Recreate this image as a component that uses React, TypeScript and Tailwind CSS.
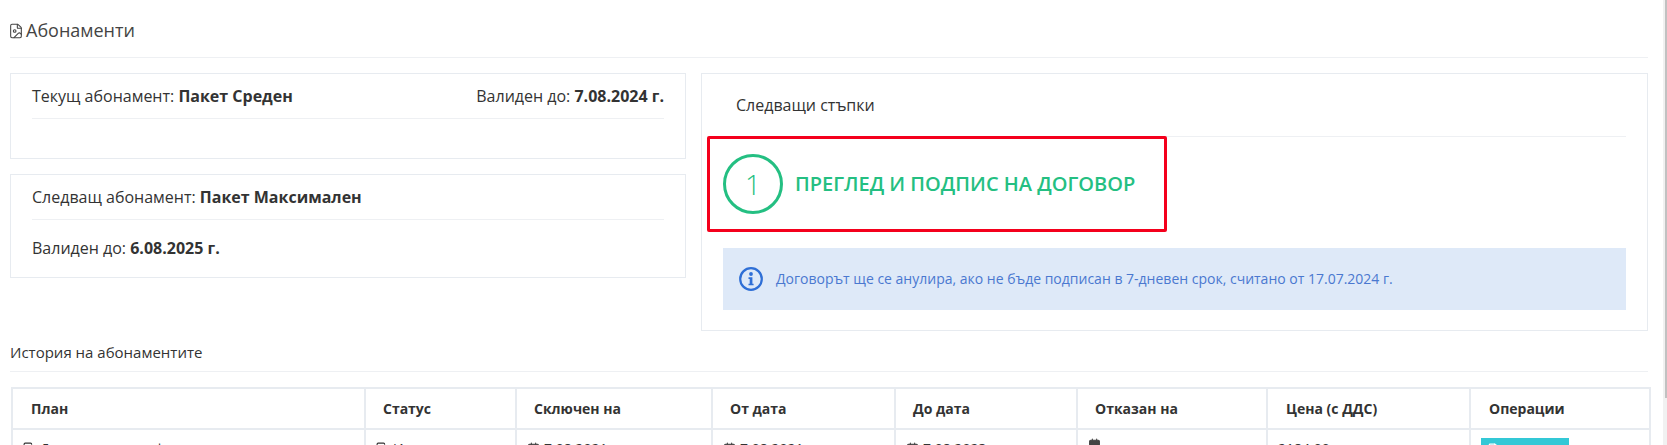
import { Calendar, Copy, FileImage, FileText } from "lucide-react";

const font = "font-['Open_Sans','Noto_Sans',sans-serif]";

const columns = [
  { label: "План", width: "w-[353px]", pad: "pl-[18px]" },
  { label: "Статус", width: "w-[151px]", pad: "pl-[17px]" },
  { label: "Сключен на", width: "w-[196px]", pad: "pl-[17px]" },
  { label: "От дата", width: "w-[183px]", pad: "pl-[17px]" },
  { label: "До дата", width: "w-[182px]", pad: "pl-[17px]" },
  { label: "Отказан на", width: "w-[190px]", pad: "pl-[17px]" },
  { label: "Цена (с ДДС)", width: "w-[203px]", pad: "pl-[18px]" },
  { label: "Операции", width: "w-[180px]", pad: "pl-[18px]" },
];

function DateCell({ value }: { value?: string }) {
  return (
    <td className="border-2 border-[#e7ebf0] px-[10px] pt-[8px] align-top text-[14px] text-[#333]">
      <span className="flex items-center gap-1">
        <Calendar size={13} fill="#444" stroke="#444" />
        {value}
      </span>
    </td>
  );
}

function TextCell({ label }: { label: string }) {
  return (
    <td className="border-2 border-[#e7ebf0] px-[10px] pt-[8px] align-top text-[14px]">
      <span className="flex items-center gap-1">
        <Copy size={13} />
        {label}
      </span>
    </td>
  );
}

function InfoIcon() {
  return (
    <svg width="24" height="24" viewBox="0 0 24 24" className="shrink-0 text-[#2f6fd6]">
      <circle cx="12" cy="12" r="10.8" fill="none" stroke="currentColor" strokeWidth="2.2" />
      <circle cx="12" cy="7" r="1.9" fill="currentColor" />
      <path d="M9.5 10.3h3.9v6.4h1.2v1.6H9.5v-1.6h1.2v-4.8H9.5z" fill="currentColor" />
    </svg>
  );
}

export default function App() {
  return (
    <div className={`${font} relative h-[445px] overflow-hidden bg-white pl-[10px] pr-[19px] text-[#333]`}>
      {/* Title */}
      <div className="flex h-[58px] items-center gap-[2px] border-b border-[#eef0f3] pt-1 text-[18px] text-[#444]">
        <FileImage size={16} strokeWidth={1.6} className="-ml-[2px]" />
        <span>Абонаменти</span>
      </div>

      <div className="mt-[15px] flex h-[258px] gap-[15px]">
        {/* Left column */}
        <div className="flex w-[676px] flex-col gap-[15px]">
          <div className="h-[86px] border border-[#e7ebf0] px-[21px]">
            <div className="flex h-[45px] items-center justify-between border-b border-[#eef0f3] text-[16px]">
              <span>
                Текущ абонамент: <b>Пакет Среден</b>
              </span>
              <span>
                Валиден до: <b>7.08.2024 г.</b>
              </span>
            </div>
          </div>
          <div className="h-[104px] border border-[#e7ebf0] px-[21px] text-[16px]">
            <div className="flex h-[45px] items-center border-b border-[#eef0f3]">
              <span>
                Следващ абонамент: <b>Пакет Максимален</b>
              </span>
            </div>
            <div className="mt-[16px]">
              Валиден до: <b>6.08.2025 г.</b>
            </div>
          </div>
        </div>

        {/* Next steps */}
        <div className="flex-1 border border-[#e7ebf0] px-[21px]">
          <div className="flex h-[63px] items-center border-b border-[#eef0f3] pl-[13px] text-[16px]">
            Следващи стъпки
          </div>
          <div className="-mt-px -ml-4 flex h-[96px] w-[460px] items-center gap-[12px] rounded-[2px] border-[3px] border-[#f4001c] pl-[13px]">
            <div className="flex h-[60px] w-[60px] items-center justify-center rounded-full border-[3px] border-[#24bf82] text-[28px] font-light text-[#24bf82]">
              1
            </div>
            <span className="text-[20px] font-semibold text-[#24bf82]">ПРЕГЛЕД И ПОДПИС НА ДОГОВОР</span>
          </div>
          <div className="mt-[16px] flex h-[62px] items-center gap-[13px] bg-[#dee9f8] pl-4 text-[14px] text-[#4a78d0]">
            <InfoIcon />
            <span className="-mt-[2px]">
              Договорът ще се анулира, ако не бъде подписан в 7-дневен срок, считано от 17.07.2024 г.
            </span>
          </div>
        </div>
      </div>

      {/* History */}
      <div className="mt-[10px] flex h-[31px] items-center border-b border-[#eef0f3] pb-[8px] text-[15px]">
        История на абонаментите
      </div>
      <table className="mt-[15px] ml-px w-[1638px] table-fixed border-collapse">
        <thead>
          <tr className="h-[41px]">
            {columns.map((col) => (
              <th key={col.label} className={`${col.width} ${col.pad} border-2 border-[#e7ebf0] text-left text-[14px] font-bold`}>
                {col.label}
              </th>
            ))}
          </tr>
        </thead>
        <tbody>
          <tr className="h-[50px]">
            <TextCell label="Дигитална трансформация" />
            <TextCell label="Изтекъл" />
            <DateCell value="7.08.2021 г." />
            <DateCell value="7.08.2021 г." />
            <DateCell value="7.08.2023 г." />
            <DateCell />
            <td className="border-2 border-[#e7ebf0] px-[10px] pt-[8px] align-top text-[14px]">2184.00 лв.</td>
            <td className="border-2 border-[#e7ebf0] px-[10px] pt-[8px] align-top text-[14px]">
              <span className="flex h-[30px] w-[88px] items-start gap-1 bg-[#33c8d6] px-[6px] pt-[1px] text-white">
                <FileText size={13} className="mt-[4px]" />
                Договор
              </span>
            </td>
          </tr>
        </tbody>
      </table>

      {/* Scrollbar */}
      <div className="absolute top-0 right-0 h-full w-[4px] bg-[#f1f1f1]">
        <div className="ml-auto h-[398px] w-[2px] bg-[#c1c1c1]" />
      </div>
    </div>
  );
}
